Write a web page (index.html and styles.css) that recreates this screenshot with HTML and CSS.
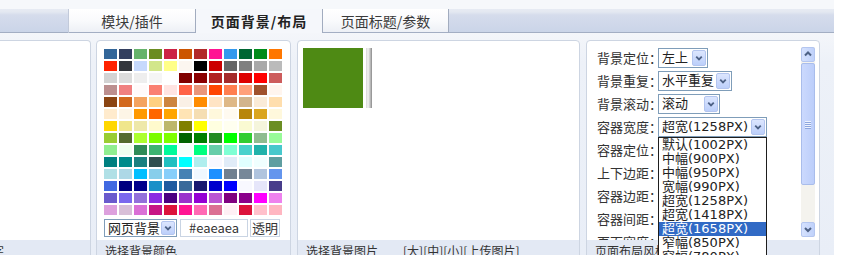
FILE: index.html
```html
<!DOCTYPE html>
<html lang="zh-CN">
<head>
<meta charset="utf-8">
<title>页面背景/布局</title>
<link rel="stylesheet" href="styles.css">
</head>
<body>
<div class="page">
  <div class="tabbar">
    <div class="tabstrip">
      <div class="tab-spacer"></div>
      <div class="tab tab-first">模块/插件</div>
      <div class="tab tab-active">页面背景/布局</div>
      <div class="tab tab-last">页面标题/参数</div>
    </div>
  </div>
  <div class="content">
    <div class="panel p1">
      <div class="pbody"></div>
      <div class="pfoot"><span class="cut">背景文字</span></div>
    </div>

    <div class="panel p2">
      <div class="pbody">
        <div class="grid">
          <i style="background:#336699"></i><i style="background:#333f5f"></i><i style="background:#66b36b"></i><i style="background:#6b8c21"></i><i style="background:#cc2244"></i><i style="background:#cc5500"></i><i style="background:#b22a2a"></i><i style="background:#ff1493"></i><i style="background:#3399ee"></i><i style="background:#006633"></i><i style="background:#008c1a"></i><i style="background:#ff7700"></i>
          <i style="background:#ff2200"></i><i style="background:#33363c"></i><i style="background:#c6d9fc"></i><i style="background:#d2e68a"></i><i style="background:#ffff88"></i><i style="background:#fcf6f0"></i><i style="background:#000000"></i><i style="background:#cc0000"></i><i style="background:#666666"></i><i style="background:#808080"></i><i style="background:#a9a9a9"></i><i style="background:#bbbbbb"></i>
          <i style="background:#d3d3d3"></i><i style="background:#dcdcdc"></i><i style="background:#eeeeee"></i><i style="background:#f5f5f5"></i><i style="background:#ffffff"></i><i style="background:#800000"></i><i style="background:#8b0000"></i><i style="background:#b22222"></i><i style="background:#a52a2a"></i><i style="background:#dd0000"></i><i style="background:#ff0000"></i><i style="background:#cd5c5c"></i>
          <i style="background:#bc8f8f"></i><i style="background:#f08080"></i><i style="background:#fffafa"></i><i style="background:#fa8072"></i><i style="background:#ffe4e1"></i><i style="background:#ff6347"></i><i style="background:#e9967a"></i><i style="background:#ff4500"></i><i style="background:#ff7f50"></i><i style="background:#ffa07a"></i><i style="background:#a0522d"></i><i style="background:#fff5ee"></i>
          <i style="background:#8b4513"></i><i style="background:#d2691e"></i><i style="background:#f4a460"></i><i style="background:#ffd080"></i><i style="background:#cd853f"></i><i style="background:#faf0e6"></i><i style="background:#ff8c00"></i><i style="background:#ffe4c4"></i><i style="background:#deb887"></i><i style="background:#d2b48c"></i><i style="background:#faebd7"></i><i style="background:#ffdead"></i>
          <i style="background:#ffebcd"></i><i style="background:#fdf5e6"></i><i style="background:#ff9900"></i><i style="background:#ff6600"></i><i style="background:#ffa500"></i><i style="background:#ffe4b5"></i><i style="background:#f5deb3"></i><i style="background:#fff8dc"></i><i style="background:#fffaf0"></i><i style="background:#b8860b"></i><i style="background:#daa520"></i><i style="background:#fff8dc"></i>
          <i style="background:#ffd700"></i><i style="background:#f0e68c"></i><i style="background:#eee8aa"></i><i style="background:#fffacd"></i><i style="background:#bdb76b"></i><i style="background:#808000"></i><i style="background:#ffff00"></i><i style="background:#ffffe0"></i><i style="background:#fffff0"></i><i style="background:#fafad2"></i><i style="background:#f5f5dc"></i><i style="background:#6b8e23"></i>
          <i style="background:#9acd32"></i><i style="background:#556b2f"></i><i style="background:#adff2f"></i><i style="background:#7cfc00"></i><i style="background:#7fff00"></i><i style="background:#006400"></i><i style="background:#008000"></i><i style="background:#228b22"></i><i style="background:#00ff00"></i><i style="background:#32cd32"></i><i style="background:#8fbc8f"></i><i style="background:#98fb98"></i>
          <i style="background:#90ee90"></i><i style="background:#f0fff0"></i><i style="background:#2e8b57"></i><i style="background:#3cb371"></i><i style="background:#00fa9a"></i><i style="background:#f5fffa"></i><i style="background:#00ff7f"></i><i style="background:#66cdaa"></i><i style="background:#7fffd4"></i><i style="background:#48d1cc"></i><i style="background:#20b2aa"></i><i style="background:#48c8cc"></i>
          <i style="background:#008080"></i><i style="background:#008b8b"></i><i style="background:#1a8080"></i><i style="background:#2f4f4f"></i><i style="background:#20c0c0"></i><i style="background:#00ffff"></i><i style="background:#afeeee"></i><i style="background:#f8f8ff"></i><i style="background:#e0ecf8"></i><i style="background:#e0ffff"></i><i style="background:#f0ffff"></i><i style="background:#5f9ea0"></i>
          <i style="background:#b0e0e6"></i><i style="background:#add8e6"></i><i style="background:#00bfff"></i><i style="background:#87ceeb"></i><i style="background:#87cefa"></i><i style="background:#4682b4"></i><i style="background:#f0f8ff"></i><i style="background:#1e90ff"></i><i style="background:#708090"></i><i style="background:#778899"></i><i style="background:#b0c4de"></i><i style="background:#6495ed"></i>
          <i style="background:#4169e1"></i><i style="background:#000080"></i><i style="background:#00008b"></i><i style="background:#1a90c8"></i><i style="background:#1e5aa0"></i><i style="background:#3a6a9a"></i><i style="background:#191970"></i><i style="background:#0000cd"></i><i style="background:#0000ff"></i><i style="background:#f8f8ff"></i><i style="background:#e6e6fa"></i><i style="background:#483d8b"></i>
          <i style="background:#6a5acd"></i><i style="background:#7b68ee"></i><i style="background:#9370db"></i><i style="background:#8a2be2"></i><i style="background:#4b0082"></i><i style="background:#9932cc"></i><i style="background:#9400d3"></i><i style="background:#ba55d3"></i><i style="background:#800080"></i><i style="background:#8b008b"></i><i style="background:#ff00ff"></i><i style="background:#ee82ee"></i>
          <i style="background:#dda0dd"></i><i style="background:#d8bfd8"></i><i style="background:#da70d6"></i><i style="background:#c71585"></i><i style="background:#dc143c"></i><i style="background:#ff1493"></i><i style="background:#ff69b4"></i><i style="background:#db7093"></i><i style="background:#fff0f5"></i><i style="background:#dc143c"></i><i style="background:#ffc0cb"></i><i style="background:#ffb6c1"></i>
        </div>
        <div class="colorrow">
          <div class="sel sel-target"><span class="sel-text">网页背景</span><span class="sel-btn"><svg viewBox="0 0 13 14" width="13" height="14"><path d="M3.5 5.5 L6.5 8.5 L9.5 5.5" fill="none" stroke="#4d6185" stroke-width="2"/></svg></span></div>
          <div class="hex">#eaeaea</div>
          <div class="trans">透明</div>
        </div>
      </div>
      <div class="pfoot">选择背景颜色</div>
    </div>

    <div class="panel p3">
      <div class="pbody">
        <div class="preview"></div>
        <div class="preview-bar"></div>
      </div>
      <div class="pfoot">选择背景图片<span class="links">[大][中][小][上传图片]</span></div>
    </div>

    <div class="panel p4">
      <div class="pbody">
        <div class="form">
          <div class="row"><span class="label">背景定位：</span><div class="sel sel-pos"><span class="sel-text">左上</span><span class="sel-btn"><svg viewBox="0 0 13 14" width="13" height="14"><path d="M3.5 5.5 L6.5 8.5 L9.5 5.5" fill="none" stroke="#4d6185" stroke-width="2"/></svg></span></div></div>
          <div class="row"><span class="label">背景重复：</span><div class="sel sel-rep"><span class="sel-text">水平重复</span><span class="sel-btn"><svg viewBox="0 0 13 14" width="13" height="14"><path d="M3.5 5.5 L6.5 8.5 L9.5 5.5" fill="none" stroke="#4d6185" stroke-width="2"/></svg></span></div></div>
          <div class="row"><span class="label">背景滚动：</span><div class="sel sel-scroll"><span class="sel-text">滚动</span><span class="sel-btn"><svg viewBox="0 0 13 14" width="13" height="14"><path d="M3.5 5.5 L6.5 8.5 L9.5 5.5" fill="none" stroke="#4d6185" stroke-width="2"/></svg></span></div></div>
          <div class="row"><span class="label">容器宽度：</span><div class="sel sel-width"><span class="sel-text">超宽(1258PX)</span><span class="sel-btn"><svg viewBox="0 0 13 14" width="13" height="14"><path d="M3.5 5.5 L6.5 8.5 L9.5 5.5" fill="none" stroke="#4d6185" stroke-width="2"/></svg></span></div></div>
          <div class="row"><span class="label">容器定位：</span></div>
          <div class="row"><span class="label">上下边距：</span></div>
          <div class="row"><span class="label">容器边距：</span></div>
          <div class="row"><span class="label">容器间距：</span></div>
          <div class="row"><span class="label">页面宽度：</span></div>
        </div>
        <div class="vscroll">
          <div class="sb-btn"><svg viewBox="0 0 12 13" width="12" height="13"><path d="M3 7.5 L6 4.5 L9 7.5" fill="none" stroke="#4d6185" stroke-width="2"/></svg></div>
          <div class="sb-thumb"><span class="grip"></span><span class="grip"></span><span class="grip"></span><span class="grip"></span></div>
          <div class="sb-track"></div>
          <div class="sb-btn"><svg viewBox="0 0 12 13" width="12" height="13"><path d="M3 5 L6 8 L9 5" fill="none" stroke="#4d6185" stroke-width="2"/></svg></div>
        </div>
      </div>
      <div class="pfoot">页面布局风格</div>
      <ul class="dropdown">
        <li>默认(1002PX)</li>
        <li>中幅(900PX)</li>
        <li>中幅(950PX)</li>
        <li>宽幅(990PX)</li>
        <li>超宽(1258PX)</li>
        <li>超宽(1418PX)</li>
        <li class="on">超宽(1658PX)</li>
        <li>窄幅(850PX)</li>
        <li>窄幅(780PX)</li>
      </ul>
    </div>
  </div>
</div>
</body>
</html>
```

FILE: styles.css
```css
html, body {
  margin: 0;
  padding: 0;
  background: #ffffff;
}

body {
  font-family: "Noto Sans CJK SC", "Noto Sans", sans-serif;
  color: #333333;
  font-size: 13px;
}

.page {
  width: 834px;
  height: 255px;
  overflow: hidden;
}

/* ---------- tabs ---------- */
.tabbar {
  height: 33px;
  box-sizing: border-box;
  padding-top: 9px;
  background: #f6f8fb;
}

.tabstrip {
  display: flex;
  height: 24px;
  background: linear-gradient(#e7ebf3 0, #e3e8f1 3px, #d5dcec 6px, #cad4e8 100%);
  box-shadow: inset 0 -1px 0 #a3aec3;
}

.tab-spacer {
  width: 68px;
  flex: none;
}

.tab {
  flex: none;
  box-sizing: border-box;
  height: 24px;
  display: flex;
  align-items: center;
  justify-content: center;
  font-size: 14px;
  line-height: 16px;
  color: #3a3a3a;
  background: linear-gradient(#ffffff 0, #f9fafc 50%, #eceff5 100%);
  border-right: 1px solid #a2acbf;
  box-shadow: inset 0 -1px 0 #a3aec3;
}

.tab-first {
  width: 128px;
  border-left: 1px solid #c2cada;
}

.tab-active {
  width: 127px;
  background: #f5f7fb;
  box-shadow: none;
  font-weight: bold;
  letter-spacing: 1px;
  color: #222222;
}

.tab-last {
  width: 126px;
}

/* ---------- content ---------- */
.content {
  display: flex;
  align-items: flex-start;
  height: 222px;
  box-sizing: border-box;
  padding-top: 7px;
  background: linear-gradient(#f4f6fa 0, #edf1f8 30px, #e9eef7 100%);
}

.panel {
  position: relative;
  flex: none;
  box-sizing: border-box;
  height: 240px;
  display: flex;
  flex-direction: column;
  border: 1px solid #cdd5e2;
  border-radius: 4px;
  background: #ffffff;
  overflow: hidden;
}

.pbody {
  flex: none;
  height: 199px;
  box-sizing: border-box;
  overflow: hidden;
}

.pfoot {
  flex: 1;
  background: #e3e9f4;
  font-size: 12px;
  line-height: 16px;
  padding: 3px 0 0 8px;
  color: #333333;
  white-space: nowrap;
}

.p1 {
  width: 91px;
  border-left: none;
  border-radius: 0 4px 4px 0;
}

.p1 .pfoot {
  padding-left: 0;
}

.cut {
  margin-left: -44px;
}

.p2 {
  width: 195px;
  margin-left: 5px;
}

.p3 {
  width: 283px;
  margin-left: 6px;
}

.p4 {
  width: 234px;
  margin-left: 6px;
}

/* ---------- colour grid ---------- */
.p2 .pbody {
  padding: 8px 0 0 7px;
}

.grid {
  display: grid;
  grid-template-columns: repeat(12, 13px);
  grid-auto-rows: 10px;
  gap: 2px;
}

.grid i {
  display: block;
}

.colorrow {
  display: flex;
  margin-top: 4px;
  height: 18px;
}

/* ---------- selects ---------- */
.sel {
  flex: none;
  box-sizing: border-box;
  display: flex;
  align-items: center;
  justify-content: space-between;
  border: 1px solid #7f9db9;
  background: #ffffff;
  font-family: "DejaVu Sans", "Noto Sans CJK SC", sans-serif;
  font-size: 13px;
  line-height: 16px;
  color: #222222;
  white-space: nowrap;
}

.sel-text {
  padding-left: 3px;
}

.sel-btn {
  flex: none;
  width: 14px;
  height: 15px;
  margin-right: 1px;
  box-sizing: border-box;
  display: flex;
  align-items: center;
  justify-content: center;
  border: 1px solid #b3c5ef;
  border-radius: 2px;
  background: linear-gradient(#dce6fe, #bccffa);
}

.sel-btn svg {
  display: block;
}

.sel-target {
  width: 73px;
  height: 18px;
  font-family: "Noto Sans CJK SC", sans-serif;
}

.sel-target .sel-btn {
  height: 14px;
}

.hex {
  flex: none;
  box-sizing: border-box;
  width: 68px;
  height: 18px;
  margin-left: 3px;
  border: 1px solid #c9d4e3;
  text-align: center;
  font-size: 13px;
  line-height: 16px;
  color: #333333;
}

.trans {
  flex: none;
  box-sizing: border-box;
  width: 30px;
  height: 18px;
  margin-left: 2px;
  border: 1px solid #c9d4e3;
  text-align: center;
  font-size: 13px;
  line-height: 16px;
  color: #333333;
}

/* ---------- picture panel ---------- */
.p3 .pbody {
  display: flex;
  align-items: flex-start;
  padding: 7px 0 0 5px;
}

.preview {
  flex: none;
  width: 60px;
  height: 60px;
  background: #4e8a14;
}

.preview-bar {
  flex: none;
  width: 6px;
  height: 60px;
  margin-left: 3px;
  background: linear-gradient(to right, #d6d6d6 0, #f4f4f4 35%, #c0c0c0 70%, #8a8a8a 100%);
}

.links {
  margin-left: 25px;
}

/* ---------- layout form ---------- */
.p4 .pbody {
  display: flex;
  align-items: flex-start;
}

.form {
  flex: 1;
  padding: 7px 0 0 10px;
}

.row {
  display: flex;
  align-items: flex-start;
  height: 23px;
}

.label {
  flex: none;
  width: 61px;
  white-space: nowrap;
  font-size: 13px;
  line-height: 20px;
  color: #333333;
}

.sel-pos { width: 50px; height: 20px; }
.sel-rep { width: 74px; height: 20px; }
.sel-scroll { width: 62px; height: 20px; }
.sel-width { width: 109px; height: 20px; }

.sel-pos .sel-btn,
.sel-rep .sel-btn,
.sel-scroll .sel-btn,
.sel-width .sel-btn {
  height: 16px;
}

/* ---------- scrollbar ---------- */
.vscroll {
  flex: none;
  width: 14px;
  height: 190px;
  margin: 6px 4px 0 0;
  display: flex;
  flex-direction: column;
  background: #f4f3ee;
}

.sb-btn {
  flex: none;
  height: 15px;
  box-sizing: border-box;
  display: flex;
  align-items: center;
  justify-content: center;
  border: 1px solid #b4c6f0;
  border-radius: 2px;
  background: linear-gradient(to right, #d6e2fe, #bfd1fa);
}

.sb-thumb {
  flex: none;
  height: 122px;
  margin-top: 1px;
  box-sizing: border-box;
  display: flex;
  flex-direction: column;
  align-items: center;
  justify-content: center;
  gap: 1px;
  border: 1px solid #a9bdeb;
  border-radius: 2px;
  background: linear-gradient(to right, #cbd9fd, #bccefa);
}

.grip {
  display: block;
  width: 6px;
  height: 1px;
  background: #eef3fe;
  box-shadow: 0 1px 0 #8da6de;
}

.sb-track {
  flex: 1;
}

/* ---------- open dropdown ---------- */
.dropdown {
  position: absolute;
  left: 71px;
  top: 96px;
  z-index: 2;
  width: 109px;
  box-sizing: border-box;
  margin: 0;
  padding: 0;
  list-style: none;
  border: 1px solid #1e1e1e;
  background: #ffffff;
  font-family: "DejaVu Sans", "Noto Sans CJK SC", sans-serif;
  font-size: 13px;
  line-height: 14px;
  color: #222222;
}

.dropdown li {
  height: 14px;
  padding-left: 3px;
  white-space: nowrap;
}

.dropdown li.on {
  background: #316ac5;
  color: #ffffff;
}
```
